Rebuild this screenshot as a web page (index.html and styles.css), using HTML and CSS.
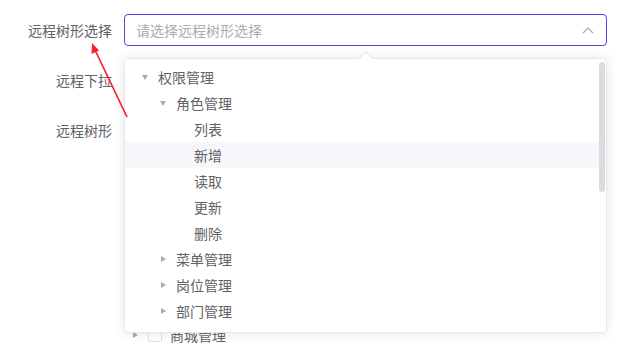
FILE: index.html
```html
<!DOCTYPE html>
<html lang="zh-CN">

<head>
  <meta charset="UTF-8">
  <meta name="viewport" content="width=device-width, initial-scale=1.0">
  <title>远程树形选择</title>
  <link rel="stylesheet" href="styles.css">
</head>

<body>
  <form class="demo-form">
    <!-- 远程树形选择 -->
    <div class="form-item">
      <label class="form-label">远程树形选择</label>
      <div class="form-content">
        <div class="select is-focus">
          <span class="select-placeholder">请选择远程树形选择</span>
          <svg class="select-arrow" width="12" height="8" viewBox="0 0 12 8">
            <polyline points="1,7 6,2 11,7" fill="none" stroke="#a8abb2" stroke-width="1.2" />
          </svg>
        </div>

        <!-- 下拉面板 -->
        <div class="select-dropdown">
          <span class="popper-arrow"></span>
          <div class="dropdown-tree">
            <div class="tree-node lv-0"><span class="caret open"></span>权限管理</div>
            <div class="tree-node lv-1"><span class="caret open"></span>角色管理</div>
            <div class="tree-node lv-2"><span class="caret leaf"></span>列表</div>
            <div class="tree-node lv-2 is-hover"><span class="caret leaf"></span>新增</div>
            <div class="tree-node lv-2"><span class="caret leaf"></span>读取</div>
            <div class="tree-node lv-2"><span class="caret leaf"></span>更新</div>
            <div class="tree-node lv-2"><span class="caret leaf"></span>删除</div>
            <div class="tree-node lv-1"><span class="caret"></span>菜单管理</div>
            <div class="tree-node lv-1"><span class="caret"></span>岗位管理</div>
            <div class="tree-node lv-1"><span class="caret"></span>部门管理</div>
          </div>
          <span class="scroll-thumb"></span>
        </div>
      </div>
    </div>

    <!-- 远程下拉 -->
    <div class="form-item">
      <label class="form-label">远程下拉</label>
      <div class="form-content">
        <div class="select">
          <span class="select-placeholder">请选择远程下拉</span>
        </div>
      </div>
    </div>

    <!-- 远程树形（上面几行被下拉面板挡住） -->
    <div class="form-item">
      <label class="form-label">远程树形</label>
      <div class="form-content">
        <div class="check-tree">
          <div class="check-node"><span class="caret"></span><span class="checkbox"></span>商城管理</div>
        </div>
      </div>
    </div>
  </form>

  <!-- 标注箭头 -->
  <svg class="note-arrow" width="633" height="350" viewBox="0 0 633 350">
    <line x1="127" y1="117" x2="95" y2="50" stroke="#f5222d" stroke-width="1.7" />
    <polygon points="92,43 91.5,54 99,50.5" fill="#f5222d" />
  </svg>
</body>

</html>
```

FILE: styles.css
```css
* {
  box-sizing: border-box;
}

body {
  margin: 0;
  background: #fff;
  font-family: "Noto Sans CJK SC", "Noto Sans", sans-serif;
  font-size: 14px;
  color: #606266;
  overflow: hidden;
}

.demo-form {
  padding-top: 14px;
  width: 607px;
}

.form-item {
  display: flex;
  margin-bottom: 18px;
}

.form-label {
  width: 124px;
  flex-shrink: 0;
  padding-right: 12px;
  text-align: right;
  line-height: 32px;
  height: 32px;
}

.form-content {
  flex: 1;
  position: relative;
}

/* 选择框 */
.select {
  height: 32px;
  border: 1px solid #dcdfe6;
  border-radius: 4px;
  display: flex;
  align-items: center;
  padding: 0 11px;
}

.select.is-focus {
  border-color: #4f46e5;
}

.select-placeholder {
  flex: 1;
  color: #a8abb2;
}

.select-arrow {
  margin-right: 1px;
}

/* 下拉面板 */
.select-dropdown {
  position: absolute;
  top: 44px;
  left: 0;
  width: 483px;
  height: 275px;
  background: #fff;
  border: 1px solid #e4e7ed;
  border-radius: 4px;
  box-shadow: 0 0 12px rgba(0, 0, 0, 0.1);
  z-index: 10;
}

.popper-arrow {
  position: absolute;
  top: -6px;
  left: 236px;
  width: 10px;
  height: 10px;
  background: #fff;
  border-top: 1px solid #e4e7ed;
  border-left: 1px solid #e4e7ed;
  transform: rotate(45deg);
}

.dropdown-tree {
  padding: 5px 0;
  height: 100%;
  overflow: hidden;
}

.tree-node {
  height: 26px;
  display: flex;
  align-items: center;
  white-space: nowrap;
}

.tree-node.is-hover {
  background: #f5f7fa;
}

.lv-0 {
  padding-left: 15px;
}

.lv-1 {
  padding-left: 33px;
}

.lv-2 {
  padding-left: 51px;
}

.caret {
  width: 12px;
  height: 12px;
  margin-right: 6px;
  position: relative;
  flex-shrink: 0;
}

.caret::after {
  content: "";
  position: absolute;
  left: 3px;
  top: 3px;
  border-left: 5px solid #a8abb2;
  border-top: 3.5px solid transparent;
  border-bottom: 3.5px solid transparent;
}

.caret.open::after {
  left: 2px;
  top: 4px;
  border-top: 5px solid #a8abb2;
  border-left: 3.5px solid transparent;
  border-right: 3.5px solid transparent;
  border-bottom: 0;
}

.caret.leaf::after {
  display: none;
}

.scroll-thumb {
  position: absolute;
  top: 3px;
  right: 1px;
  width: 6px;
  height: 130px;
  border-radius: 3px;
  background: #dcdcdc;
}

/* 下方树形，前几行藏在面板后面 */
.check-tree {
  padding-top: 208px;
}

.check-node {
  height: 26px;
  display: flex;
  align-items: center;
  padding-left: 6px;
}

.checkbox {
  width: 14px;
  height: 14px;
  border: 1px solid #dcdfe6;
  border-radius: 2px;
  margin-right: 8px;
}

/* 标注 */
.note-arrow {
  position: absolute;
  top: 0;
  left: 0;
  z-index: 20;
  pointer-events: none;
}
```
